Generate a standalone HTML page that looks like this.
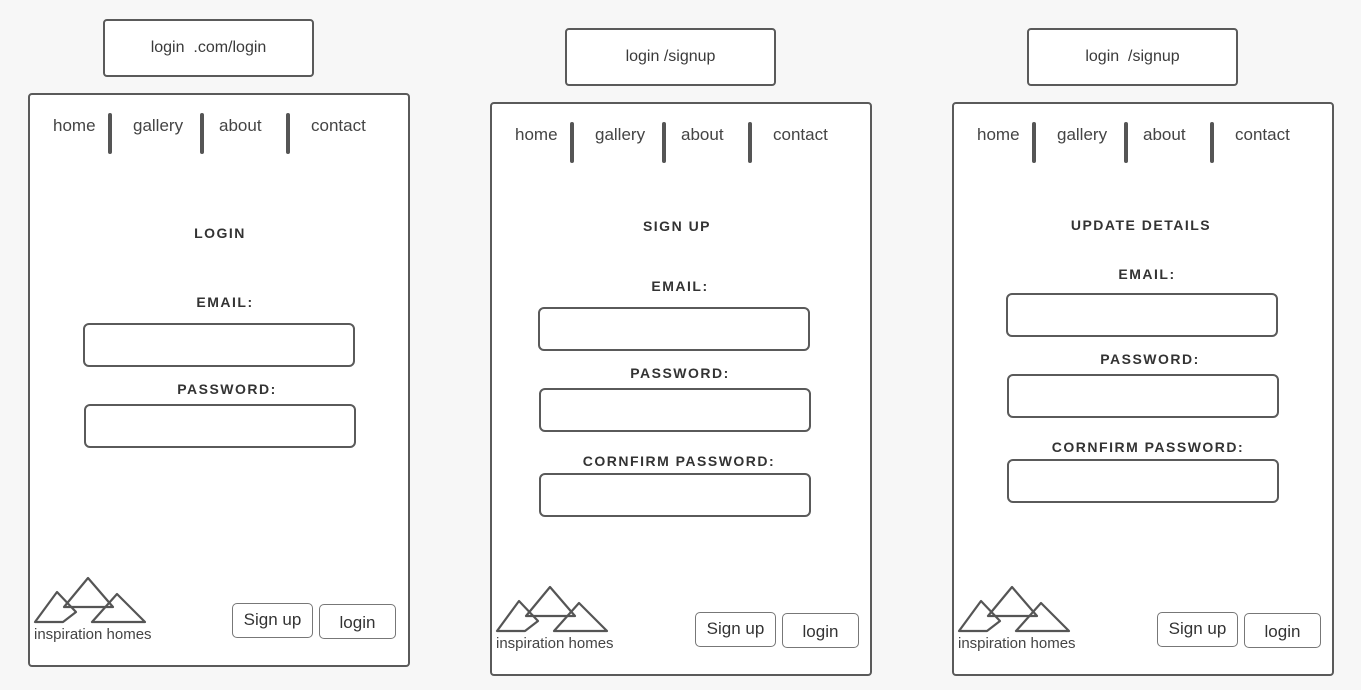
<!DOCTYPE html>
<html><head><meta charset="utf-8"><style>
body{margin:0;width:1361px;height:690px;background:#f7f7f7;position:relative;overflow:hidden;font-family:"Liberation Sans",sans-serif;color:#3a3a3a}
div{position:absolute;box-sizing:border-box}
.frame{border:2px solid #5a5a5a;border-radius:4px;background:#fff}
.top{border:2px solid #5a5a5a;border-radius:4px;background:#fff;width:211px;height:58px;font-size:16px;text-align:center;line-height:54px}
.nav{font-size:17px;color:#444}
.bar{width:4px;height:41px;background:#555;border-radius:2px}
.lab{width:300px;text-align:center;font-weight:bold;font-size:14px;letter-spacing:1.5px;color:#333;line-height:18px}
.inp{width:272px;height:44px;border:2px solid #5a5a5a;border-radius:6px;background:#fff}
.btn{border:1px solid #777;border-radius:5px;background:#fff;font-size:17px;text-align:center;color:#333}
.logo{font-size:15px;color:#444}
</style></head><body>

<!-- panel 1 -->
<div class="top" style="left:103px;top:19px">login &nbsp;.com/login</div>
<div class="frame" style="left:28px;top:93px;width:382px;height:574px"></div>
<div class="nav" style="left:53px;top:116px">home</div>
<div class="bar" style="left:108px;top:113px"></div>
<div class="nav" style="left:133px;top:116px">gallery</div>
<div class="bar" style="left:200px;top:113px"></div>
<div class="nav" style="left:219px;top:116px">about</div>
<div class="bar" style="left:286px;top:113px"></div>
<div class="nav" style="left:311px;top:116px">contact</div>
<div class="lab" style="left:70px;top:224px">LOGIN</div>
<div class="lab" style="left:75px;top:293px">EMAIL:</div>
<div class="inp" style="left:83px;top:323px"></div>
<div class="lab" style="left:77px;top:380px">PASSWORD:</div>
<div class="inp" style="left:84px;top:404px"></div>
<svg style="position:absolute;left:30px;top:574px" width="120" height="56" viewBox="0 0 120 56"><g fill="none" stroke="#555" stroke-width="2.2" stroke-linejoin="round"><path d="M27 18 L5 48 L33 48 L46 38 Z"/><path d="M58 4 L34 33 L83 33 Z"/><path d="M87 20 L62 48 L115 48 Z"/></g></svg>
<div class="logo" style="left:34px;top:626px">inspiration homes</div>
<div class="btn" style="left:232px;top:603px;width:81px;height:35px;line-height:31px">Sign up</div>
<div class="btn" style="left:319px;top:604px;width:77px;height:35px;line-height:35px">login</div>

<!-- panel 2 -->
<div class="top" style="left:565px;top:28px">login /signup</div>
<div class="frame" style="left:490px;top:102px;width:382px;height:574px"></div>
<div class="nav" style="left:515px;top:125px">home</div>
<div class="bar" style="left:570px;top:122px"></div>
<div class="nav" style="left:595px;top:125px">gallery</div>
<div class="bar" style="left:662px;top:122px"></div>
<div class="nav" style="left:681px;top:125px">about</div>
<div class="bar" style="left:748px;top:122px"></div>
<div class="nav" style="left:773px;top:125px">contact</div>
<div class="lab" style="left:527px;top:217px">SIGN UP</div>
<div class="lab" style="left:530px;top:277px">EMAIL:</div>
<div class="inp" style="left:538px;top:307px"></div>
<div class="lab" style="left:530px;top:364px">PASSWORD:</div>
<div class="inp" style="left:539px;top:388px"></div>
<div class="lab" style="left:529px;top:452px">CORNFIRM PASSWORD:</div>
<div class="inp" style="left:539px;top:473px"></div>
<svg style="position:absolute;left:492px;top:583px" width="120" height="56" viewBox="0 0 120 56"><g fill="none" stroke="#555" stroke-width="2.2" stroke-linejoin="round"><path d="M27 18 L5 48 L33 48 L46 38 Z"/><path d="M58 4 L34 33 L83 33 Z"/><path d="M87 20 L62 48 L115 48 Z"/></g></svg>
<div class="logo" style="left:496px;top:635px">inspiration homes</div>
<div class="btn" style="left:695px;top:612px;width:81px;height:35px;line-height:31px">Sign up</div>
<div class="btn" style="left:782px;top:613px;width:77px;height:35px;line-height:35px">login</div>

<!-- panel 3 -->
<div class="top" style="left:1027px;top:28px">login &nbsp;/signup</div>
<div class="frame" style="left:952px;top:102px;width:382px;height:574px"></div>
<div class="nav" style="left:977px;top:125px">home</div>
<div class="bar" style="left:1032px;top:122px"></div>
<div class="nav" style="left:1057px;top:125px">gallery</div>
<div class="bar" style="left:1124px;top:122px"></div>
<div class="nav" style="left:1143px;top:125px">about</div>
<div class="bar" style="left:1210px;top:122px"></div>
<div class="nav" style="left:1235px;top:125px">contact</div>
<div class="lab" style="left:991px;top:216px">UPDATE DETAILS</div>
<div class="lab" style="left:997px;top:265px">EMAIL:</div>
<div class="inp" style="left:1006px;top:293px"></div>
<div class="lab" style="left:1000px;top:350px">PASSWORD:</div>
<div class="inp" style="left:1007px;top:374px"></div>
<div class="lab" style="left:998px;top:438px">CORNFIRM PASSWORD:</div>
<div class="inp" style="left:1007px;top:459px"></div>
<svg style="position:absolute;left:954px;top:583px" width="120" height="56" viewBox="0 0 120 56"><g fill="none" stroke="#555" stroke-width="2.2" stroke-linejoin="round"><path d="M27 18 L5 48 L33 48 L46 38 Z"/><path d="M58 4 L34 33 L83 33 Z"/><path d="M87 20 L62 48 L115 48 Z"/></g></svg>
<div class="logo" style="left:958px;top:635px">inspiration homes</div>
<div class="btn" style="left:1157px;top:612px;width:81px;height:35px;line-height:31px">Sign up</div>
<div class="btn" style="left:1244px;top:613px;width:77px;height:35px;line-height:35px">login</div>
</body></html>
